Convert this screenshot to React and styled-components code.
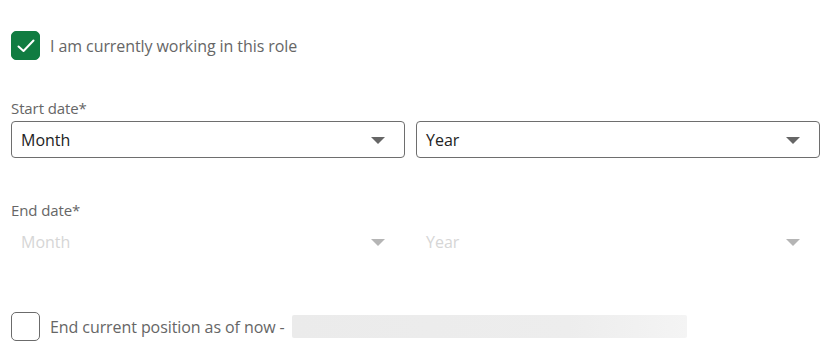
import React from 'react';
import styled, { createGlobalStyle } from 'styled-components';

const GlobalStyle = createGlobalStyle`
  body {
    margin: 0;
    background: #ffffff;
    font-family: 'Open Sans', 'Noto Sans', sans-serif;
  }
`;

const Form = styled.div`
  width: 810px;
  padding: 31px 0 0 11px;
  display: flex;
  flex-direction: column;
`;

const CheckRow = styled.label`
  display: flex;
  align-items: center;
  gap: 10px;
  height: 29px;
  margin-bottom: ${(p) => p.$mb || 0}px;
`;

const Box = styled.span`
  width: 29px;
  height: 29px;
  flex-shrink: 0;
  box-sizing: border-box;
  border-radius: 5px;
  border: 1px solid ${(p) => (p.$checked ? '#107c41' : '#6b6b6b')};
  background: ${(p) => (p.$checked ? '#107c41' : '#ffffff')};
  display: flex;
  align-items: center;
  justify-content: center;
`;

const CheckText = styled.span`
  font-size: 16px;
  color: #666666;
  letter-spacing: -0.08px;
  margin-top: 1px;
`;

const Field = styled.div`
  display: flex;
  flex-direction: column;
  margin-bottom: ${(p) => p.$mb || 0}px;
`;

const Label = styled.div`
  font-size: 15px;
  color: #666666;
  line-height: 20px;
  margin-bottom: 3px;
  letter-spacing: -0.1px;
`;

const SelectRow = styled.div`
  display: grid;
  grid-template-columns: 394px 404px;
  gap: 11px;
`;

const Select = styled.div`
  height: 37px;
  box-sizing: border-box;
  border: 1px solid ${(p) => (p.$disabled ? 'transparent' : '#6e6e6e')};
  border-radius: 4px;
  display: flex;
  align-items: center;
  justify-content: space-between;
  padding: 1px 19px 0 9px;
  font-size: 16px;
  color: ${(p) => (p.$disabled ? '#d6d6d6' : '#222222')};
`;

const Placeholder = styled.div`
  width: 395px;
  height: 23px;
  margin-left: -3px;
  border-radius: 2px;
  background: linear-gradient(90deg, #ebebeb 0%, #ededed 70%, #f4f4f4 100%);
`;

const Arrow = ({ color }) => (
  <svg width="14" height="7" viewBox="0 0 14 7">
    <path d="M0 0 H14 L7 7 Z" fill={color} />
  </svg>
);

const Check = () => (
  <svg width="18" height="14" viewBox="0 0 18 14" fill="none">
    <path d="M1.5 7.5 L6.5 12 L16.5 1.5" stroke="#ffffff" strokeWidth="2" strokeLinecap="round" strokeLinejoin="round" />
  </svg>
);

const DateField = ({ label, disabled, mb }) => (
  <Field $mb={mb}>
    <Label>{label}</Label>
    <SelectRow>
      <Select $disabled={disabled}>
        Month
        <Arrow color={disabled ? '#b5b5b5' : '#666666'} />
      </Select>
      <Select $disabled={disabled}>
        Year
        <Arrow color={disabled ? '#b5b5b5' : '#666666'} />
      </Select>
    </SelectRow>
  </Field>
);

export default function App() {
  return (
    <>
      <GlobalStyle />
      <Form>
        <CheckRow $mb={38}>
          <Box $checked>
            <Check />
          </Box>
          <CheckText>I am currently working in this role</CheckText>
        </CheckRow>
        <DateField label="Start date*" mb={42} />
        <DateField label="End date*" disabled mb={52} />
        <CheckRow>
          <Box />
          <CheckText>End current position as of now -</CheckText>
          <Placeholder />
        </CheckRow>
      </Form>
    </>
  );
}
